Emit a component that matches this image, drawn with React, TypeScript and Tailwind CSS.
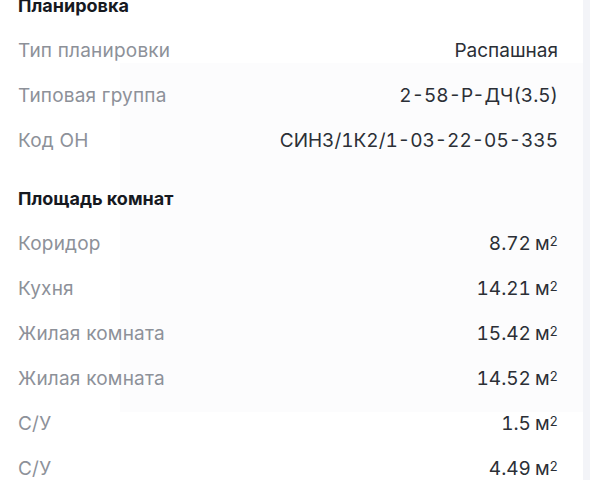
const layout = [
  { label: 'Тип планировки', value: 'Распашная' },
  { label: 'Типовая группа', value: '2-58-Р-ДЧ(3.5)' },
  { label: 'Код ОН', value: 'СИН3/1К2/1-03-22-05-335' },
]

const rooms = [
  { label: 'Коридор', value: '8.72' },
  { label: 'Кухня', value: '14.21' },
  { label: 'Жилая комната', value: '15.42' },
  { label: 'Жилая комната', value: '14.52' },
  { label: 'С/У', value: '1.5' },
  { label: 'С/У', value: '4.49' },
]

function Row({ label, children }: { label: string; children: React.ReactNode }) {
  return (
    <div className="flex h-[45px] items-center justify-between">
      <span className="text-[19px] tracking-[0.2px] text-[#8d9199]">{label}</span>
      <span className="text-[19px] text-[#2b2f36] tabular-nums">{children}</span>
    </div>
  )
}

function Area({ value }: { value: string }) {
  return (
    <>
      {value}
      <span className="ml-[4px]">м</span>
      <sup className="relative -top-[4px] text-[13px]">2</sup>
    </>
  )
}

export default function App() {
  return (
    <div
      className="relative flex h-[480px] w-[590px] overflow-hidden bg-white"
      style={{ fontFamily: 'Inter, "Noto Sans", sans-serif' }}
    >
      <div className="pointer-events-none absolute left-[120px] top-[63px] h-[349px] w-[463px] bg-[#fcfcfd]" />
      <div className="relative flex-1 pl-[18px] pr-[25px]">
        <section className="-mt-[6px]">
          <h2 className="mb-[11px] h-[24px] text-[18px] font-bold leading-[24px] text-[#16191f]">
            Планировка
          </h2>
          {layout.map((r) => (
            <Row key={r.label} label={r.label}>
              {r.value}
            </Row>
          ))}
        </section>
        <section className="mt-[23px]">
          <h2 className="mb-[11px] h-[24px] text-[18px] font-bold leading-[24px] text-[#16191f]">
            Площадь комнат
          </h2>
          {rooms.map((r, i) => (
            <Row key={i} label={r.label}>
              <Area value={r.value} />
            </Row>
          ))}
        </section>
      </div>
      <div className="w-[7px] bg-[#f3f4f8]" />
    </div>
  )
}
